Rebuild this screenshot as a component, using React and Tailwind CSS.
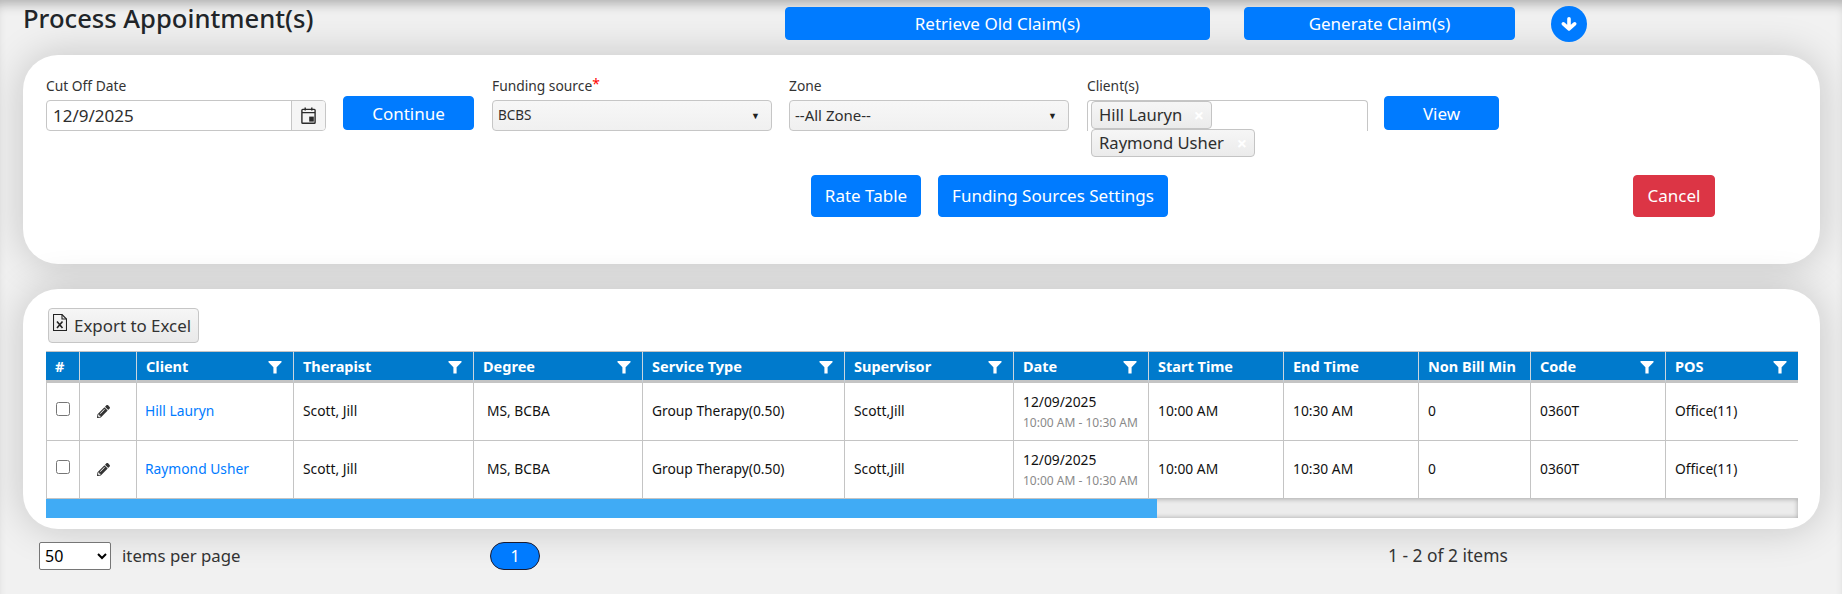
import React from "react";
import { FaPencilAlt } from "react-icons/fa";

const cols = [34, 57, 157, 180, 169, 202, 169, 135, 135, 135, 112, 135, 132];
const heads = [
  ["#", false], ["", false], ["Client", true], ["Therapist", true], ["Degree", true], ["Service Type", true],
  ["Supervisor", true], ["Date", true], ["Start Time", false], ["End Time", false], ["Non Bill Min", false], ["Code", true], ["POS", true],
];
const rows = ["Hill Lauryn", "Raymond Usher"];

function Funnel() {
  return (
    <svg viewBox="0 0 14 14" className="w-[14px] h-[14px] shrink-0" fill="#fff">
      <path d="M0.5 1H13.5V2.2L8.6 7.2V13.4H5.4V7.2L0.5 2.2z" />
    </svg>
  );
}

function ArrowDownThick() {
  return (
    <svg viewBox="0 0 16 14" className="w-[16px] h-[14px]" fill="none" stroke="#fff" strokeWidth="3.6" strokeLinecap="round" strokeLinejoin="round">
      <path d="M8 1.8V11.4M2.4 6.8L8 11.8L13.6 6.8" />
    </svg>
  );
}

function Calendar() {
  return (
    <svg viewBox="0 0 15 17" className="w-[15px] h-[17px]" fill="none" stroke="#2b2b2b" strokeWidth="1.4">
      <rect x="0.9" y="2.4" width="13.2" height="13.8" rx="0.8" />
      <path d="M1 5.6h13M4.2 0.4v3M10.8 0.4v3" />
      <rect x="8.2" y="9.6" width="4.6" height="5" fill="#2b2b2b" stroke="none" />
    </svg>
  );
}

function ExcelIcon() {
  return (
    <svg viewBox="0 0 14 17" className="w-[14px] h-[17px] shrink-0" fill="none" stroke="#222" strokeWidth="1.1">
      <path d="M0.5 0.5H9L13.5 5V16.5H0.5z" />
      <path d="M9 0.5V5H13.5" />
      <path d="M4 7.5L9.5 14M9.5 7.5L4 14" strokeWidth="1.6" />
    </svg>
  );
}

function Btn({ className = "", color = "bg-[#007bff] border-[#007bff]", children }) {
  return (
    <button className={"flex items-center justify-center rounded-[4px] text-white border text-[17px] " + color + " " + className}>
      {children}
    </button>
  );
}

function Chip({ name, w }) {
  return (
    <div className={"flex items-center justify-between h-[28px] pl-[7px] pr-[7px] rounded-[4px] border border-[#c4c4c4] bg-gradient-to-b from-[#f6f6f6] to-[#ebebeb] text-[#2e2e2e] text-[16.6px] leading-none " + w}>
      <span>{name}</span>
      <span className="text-white text-[18px] font-bold">×</span>
    </div>
  );
}

function Dropdown({ label, value, req, textClass }) {
  return (
    <div className="w-[280px] shrink-0">
      <div className="h-[16px] mb-[6px] text-[13.8px] leading-[16px] text-[#333]">
        {label}
        {req && <span className="text-[#ff0000] relative -top-[2px]">*</span>}
      </div>
      <div className="h-[31px] flex items-center justify-between pl-[5px] pr-[11px] border border-[#c6c6c6] rounded-[4px] bg-gradient-to-b from-[#f7f7f7] to-[#f0f0f0] text-[#2e2e2e]">
        <span className={textClass}>{value}</span>
        <span className="text-[9px] text-[#222]">▼</span>
      </div>
    </div>
  );
}

export default function App() {
  return (
    <div className="relative w-[1842px] h-[594px] overflow-hidden bg-[#f1f1f1] font-['Noto_Sans','Open_Sans',sans-serif] shadow-[inset_0_10px_12px_-6px_rgba(0,0,0,0.28)]">
      {/* top bar */}
      <div className="h-[55px] flex items-start">
        <h1 className="ml-[23px] w-[762px] shrink-0 text-[25.6px] leading-[38px] font-medium text-[#212529]">Process Appointment(s)</h1>
        <Btn className="mt-[7px] w-[425px] h-[33px]">Retrieve Old Claim(s)</Btn>
        <Btn className="mt-[7px] ml-[34px] w-[271px] h-[33px]">Generate Claim(s)</Btn>
        <div className="mt-[6px] ml-[36px] w-[36px] h-[36px] rounded-full bg-[#007bff] flex items-center justify-center">
          <ArrowDownThick />
        </div>
      </div>

      {/* form card */}
      <div className="ml-[23px] w-[1797px] h-[209px] rounded-[35px] bg-white shadow-[0_0_40px_rgba(0,0,0,0.19)] pl-[23px] pt-[23px]">
        <div className="flex items-start h-[53px]">
          <div className="w-[280px] shrink-0">
            <div className="h-[16px] mb-[6px] text-[13.8px] leading-[16px] text-[#333]">Cut Off Date</div>
            <div className="h-[31px] flex border border-[#c6c6c6] rounded-[4px] overflow-hidden">
              <div className="flex-1 flex items-center pl-[6px] text-[17px] text-[#2e2e2e]">12/9/2025</div>
              <div className="w-[34px] flex items-center justify-center border-l border-[#c6c6c6] bg-[#f5f5f5]"><Calendar /></div>
            </div>
          </div>
          <Btn className="ml-[17px] mt-[18px] w-[131px] h-[34px] shrink-0"><span className="mt-[1px]">Continue</span></Btn>
          <div className="ml-[18px]"><Dropdown label="Funding source" req value="BCBS" textClass="text-[13.5px]" /></div>
          <div className="ml-[17px]"><Dropdown label="Zone" value="--All Zone--" textClass="text-[15px]" /></div>
          <div className="ml-[18px] w-[281px] shrink-0">
            <div className="h-[16px] mb-[6px] text-[13.8px] leading-[16px] text-[#333]">Client(s)</div>
            <div className="h-[31px] border-t border-l border-r border-[#c6c6c6] rounded-t-[4px] pl-[3px]">
              <div className="flex flex-col items-start">
                <Chip name="Hill Lauryn" w="w-[121px]" />
                <Chip name="Raymond Usher" w="w-[164px]" />
              </div>
            </div>
          </div>
          <Btn className="ml-[16px] mt-[18px] w-[115px] h-[34px] shrink-0"><span className="mt-[1px]">View</span></Btn>
        </div>
        <div className="flex mt-[44px] ml-[765px]">
          <Btn className="w-[110px] h-[42px]">Rate Table</Btn>
          <Btn className="ml-[17px] w-[230px] h-[42px]">Funding Sources Settings</Btn>
          <Btn color="bg-[#dc3545] border-[#dc3545]" className="ml-[465px] w-[82px] h-[42px]">Cancel</Btn>
        </div>
      </div>

      {/* table card */}
      <div className="ml-[23px] mt-[25px] w-[1797px] h-[240px] rounded-[35px] bg-white shadow-[0_0_40px_rgba(0,0,0,0.19)] pl-[23px] pt-[19px]">
        <button className="ml-[2px] w-[151px] h-[35px] flex items-center pl-[4px] gap-[7px] rounded-[4px] border border-[#c6c6c6] bg-gradient-to-b from-[#f6f6f6] to-[#e9e9e9] text-[16.9px] text-[#333]">
          <span className="-mt-[6px]"><ExcelIcon /></span>
          <span className="whitespace-nowrap">Export to Excel</span>
        </button>
        <table className="mt-[8px] w-[1752px] table-fixed border-separate border-spacing-0">
          <colgroup>
            {cols.map((c, i) => <col key={i} style={{ width: c }} />)}
          </colgroup>
          <thead>
            <tr>
              {heads.map(([h, f], i) => (
                <th key={i} className={"h-[32px] p-0 pl-[9px] pr-[11px] text-left bg-[#007acc] text-white text-[14.5px] font-bold border-t border-b-[3px] border-t-[#c4c4c4] border-b-[#c4c4c4] " + (i < 12 ? "border-r border-r-[#c9d6df]" : "")}>
                  <div className="flex items-center justify-between pt-[1px]">
                    <span className="whitespace-nowrap">{h}</span>
                    {f && <Funnel />}
                  </div>
                </th>
              ))}
            </tr>
          </thead>
          <tbody>
            {rows.map((name) => {
              const cell = "h-[58px] p-0 border-b border-[#c4c4c4] text-[13.8px] whitespace-nowrap ";
              const br = "border-r text-[#111] pl-[9px] ";
              return (
                <tr key={name}>
                  <td className={cell + "border-r border-l text-[#111] pl-[9px]"}><input type="checkbox" className="block w-[14px] h-[14px] -mt-[6px]" /></td>
                  <td className={cell + "border-r text-[#111] pl-[17px]"}><FaPencilAlt className="w-[13px] h-[13px] text-[#333]" /></td>
                  <td className={cell + "border-r text-[#007bff] pl-[8px]"}>{name}</td>
                  <td className={cell + br}>Scott, Jill</td>
                  <td className={cell + "border-r text-[#111] pl-[13px]"}>MS, BCBA</td>
                  <td className={cell + br}>Group Therapy(0.50)</td>
                  <td className={cell + br}>Scott,Jill</td>
                  <td className={cell + br}>
                    <div className="text-[13.8px] leading-[18px]">12/09/2025</div>
                    <div className="mt-[5px] text-[12px] leading-[14px] text-[#8a8a8a]">10:00 AM - 10:30 AM</div>
                  </td>
                  <td className={cell + br}>10:00 AM</td>
                  <td className={cell + br}>10:30 AM</td>
                  <td className={cell + br}>0</td>
                  <td className={cell + br}>0360T</td>
                  <td className={cell + "text-[#111] pl-[9px]"}>Office(11)</td>
                </tr>
              );
            })}
          </tbody>
        </table>
        <div className="w-[1752px] h-[19px] bg-[#ececec] shadow-[inset_0_0_5px_rgba(0,0,0,0.3)]">
          <div className="w-[1111px] h-full bg-[#40abf5]" />
        </div>
      </div>

      {/* pager */}
      <div className="flex items-center h-[30px] mt-[12px] pl-[39px] text-[16.8px] text-[#333]">
        <select className="w-[72px] h-[28px] border border-[#767676] rounded-[2px] bg-white text-[16px] text-black pl-[1px]" defaultValue="50">
          <option>50</option>
        </select>
        <span className="ml-[11px] w-[368px] shrink-0">items per page</span>
        <div className="w-[50px] h-[28px] flex items-center justify-center rounded-full bg-[#007bff] border border-[#1a1a2e] text-white text-[16px]">1</div>
        <span className="ml-[848px] -mt-[2px] text-[17.4px]">1 - 2 of 2 items</span>
      </div>
    </div>
  );
}
